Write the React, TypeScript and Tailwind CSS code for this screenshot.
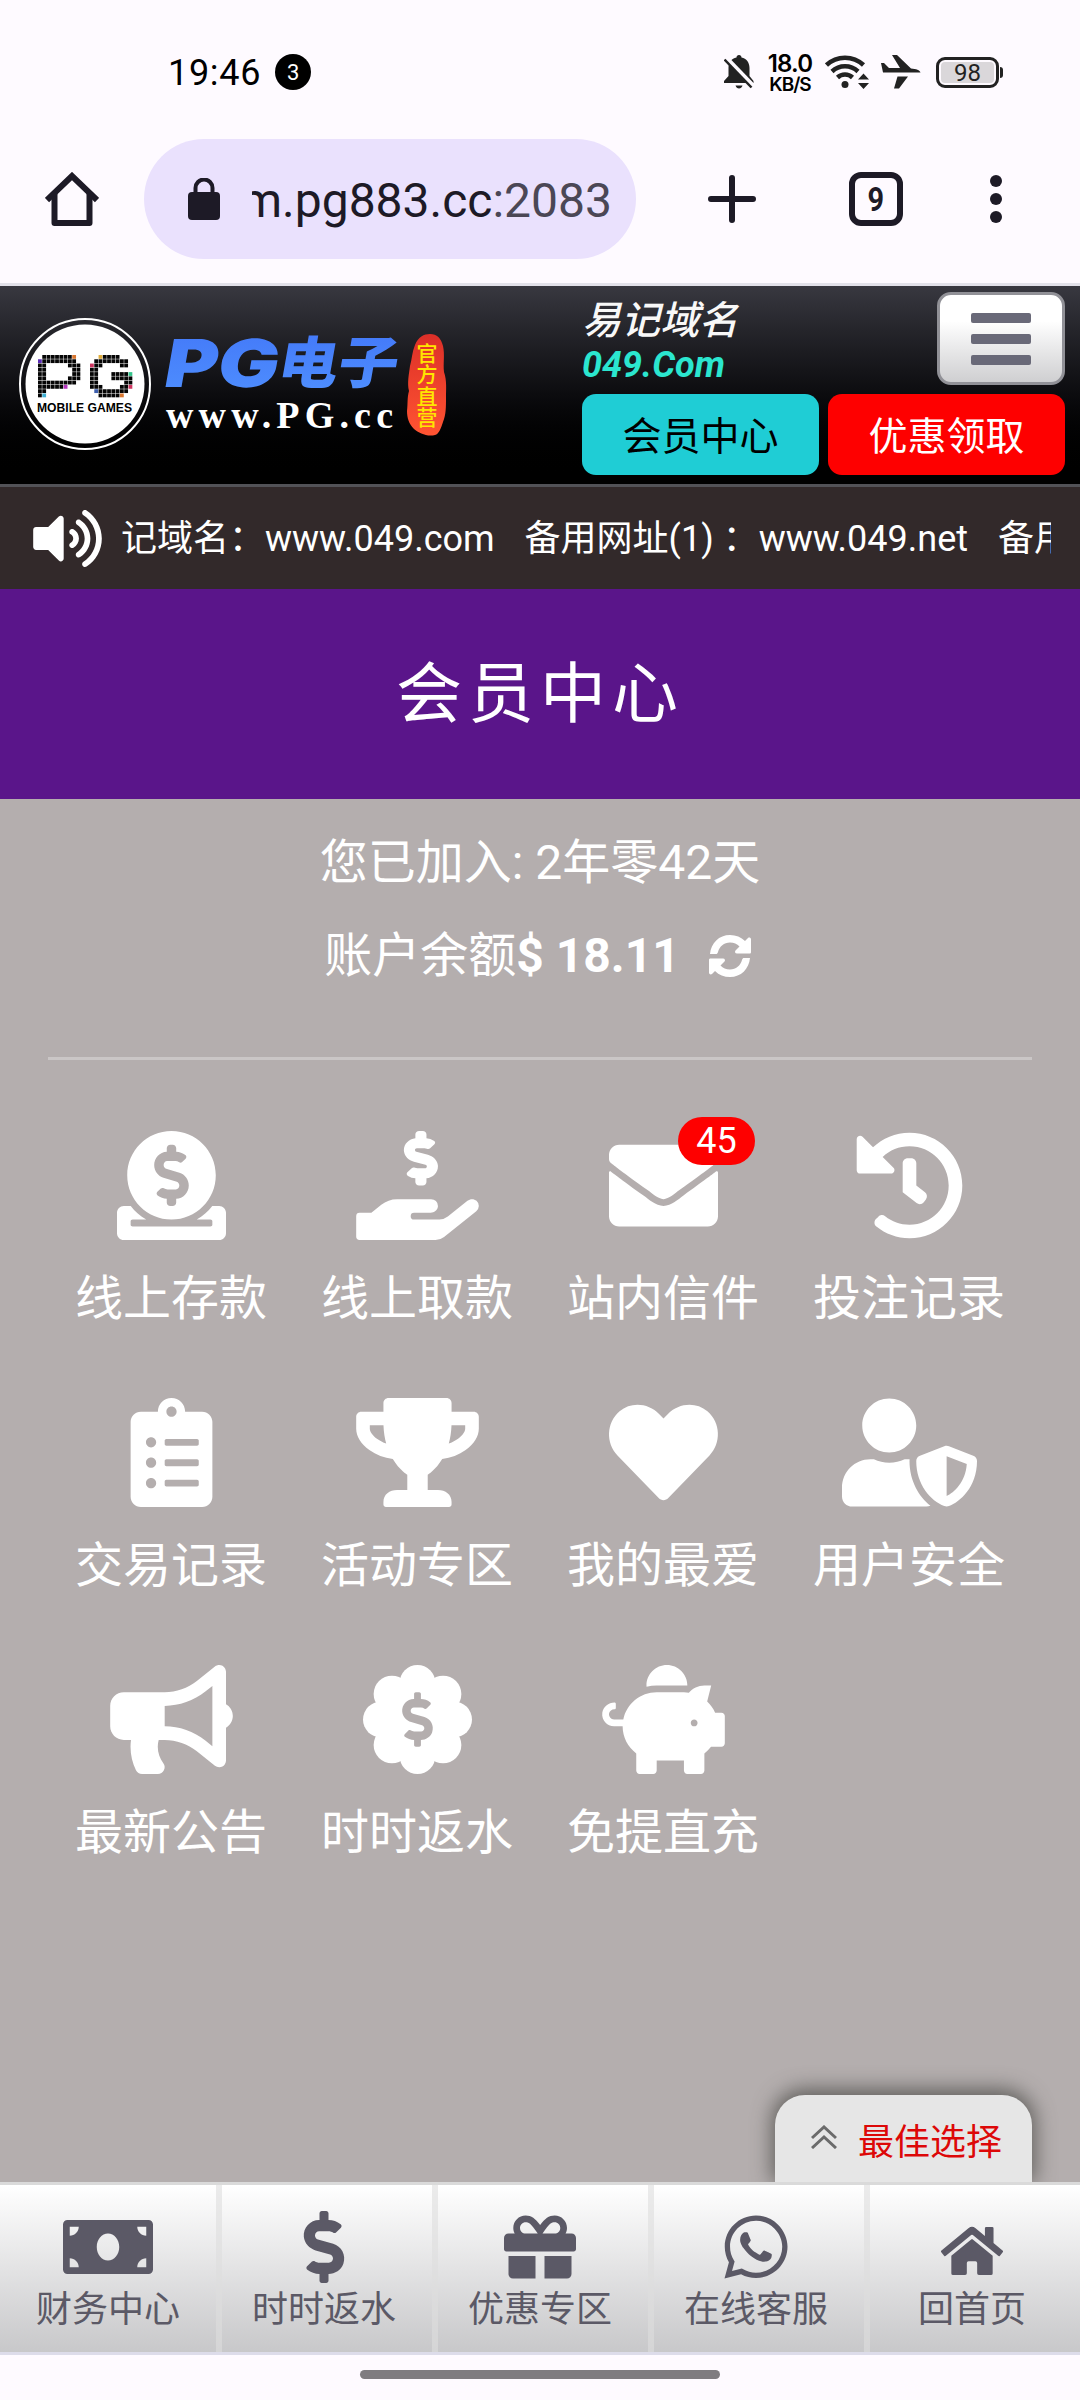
import type { IconType } from "react-icons";
import {
  FaBullhorn,
  FaClipboardList,
  FaDollarSign,
  FaDonate,
  FaEnvelope,
  FaGift,
  FaHandHoldingUsd,
  FaHeart,
  FaHistory,
  FaHome,
  FaMoneyBill,
  FaPiggyBank,
  FaTrophy,
  FaUserShield,
  FaVolumeUp,
  FaWhatsapp,
} from "react-icons/fa";

// Scalloped badge with a dollar sign cut out of it
const BadgeDollar = ({ className }: { className?: string }) => (
  <svg viewBox="0 0 512 512" className={className} fill="currentColor">
    <circle cx="256" cy="256" r="180" />
    <circle cx="256" cy="84" r="84" />
    <circle cx="376" cy="136" r="86" />
    <circle cx="428" cy="256" r="84" />
    <circle cx="376" cy="376" r="86" />
    <circle cx="256" cy="428" r="84" />
    <circle cx="136" cy="376" r="86" />
    <circle cx="84" cy="256" r="84" />
    <circle cx="136" cy="136" r="86" />
    <path
      transform="translate(184 128) scale(0.5)"
      fill="#b4aeae"
      d="M209.2 233.4l-108-31.6C88.7 198.2 80 186.5 80 173.5c0-16.3 13.2-29.5 29.5-29.5h66.3c12.2 0 24.2 3.7 34.2 10.5 6.1 4.1 14.3 3.1 19.5-2l34.8-34c7.1-6.9 6.1-18.4-1.8-24.5C238 74.8 207.4 64.1 176 64V16c0-8.8-7.2-16-16-16h-32c-8.8 0-16 7.2-16 16v48h-2.5C45.8 64-5.4 118.7.5 183.6c4.2 46.1 39.4 83.6 83.8 96.6l102.5 30c12.5 3.7 21.2 15.3 21.2 28.3 0 16.3-13.2 29.5-29.5 29.5h-66.3C100 368 88 364.3 78 357.5c-6.1-4.1-14.3-3.1-19.5 2l-34.8 34c-7.1 6.9-6.1 18.4 1.8 24.5 24.5 19.2 55.1 29.9 86.5 30v48c0 8.8 7.2 16 16 16h32c8.8 0 16-7.2 16-16v-48.2c46.6-.9 90.3-28.6 105.7-72.7 21.5-61.6-14.6-124.8-72.5-141.7z"
    />
  </svg>
);

interface MenuItem {
  label: string;
  icon: IconType | typeof BadgeDollar;
  badge?: number;
}

const menu: MenuItem[] = [
  { label: "线上存款", icon: FaDonate },
  { label: "线上取款", icon: FaHandHoldingUsd },
  { label: "站内信件", icon: FaEnvelope, badge: 45 },
  { label: "投注记录", icon: FaHistory },
  { label: "交易记录", icon: FaClipboardList },
  { label: "活动专区", icon: FaTrophy },
  { label: "我的最爱", icon: FaHeart },
  { label: "用户安全", icon: FaUserShield },
  { label: "最新公告", icon: FaBullhorn },
  { label: "时时返水", icon: BadgeDollar },
  { label: "免提直充", icon: FaPiggyBank },
];

const tabs = [
  { label: "财务中心", icon: FaMoneyBill, size: "h-[72px] w-[90px]" },
  { label: "时时返水", icon: FaDollarSign, size: "h-[72px] w-[72px]" },
  { label: "优惠专区", icon: FaGift, size: "h-[72px] w-[72px]" },
  { label: "在线客服", icon: FaWhatsapp, size: "h-[72px] w-[72px]" },
  { label: "回首页", icon: FaHome, size: "mt-2 h-[56px] w-[62px]" },
];

// Pixel letters of the round logo. "#" is black, the other letters are keys of pixelColors
const pixelP = [
  ".#######o.",
  "v########.",
  "##.....###",
  "##......##",
  "##......##",
  "##.....###",
  "#########.",
  "######m...",
  "##........",
  "#c........",
];

const pixelG = [
  "..y####...",
  ".########.",
  "r##....##.",
  "##........",
  "##...####g",
  "##...#####",
  "##......##",
  "###....##r",
  ".b#######.",
  "..#####o..",
];

const pixelColors: Record<string, string> = {
  "#": "#050505",
  o: "#d9762f",
  v: "#5a2bb5",
  m: "#b334bd",
  c: "#3fb0d4",
  y: "#e0ad3c",
  r: "#cf3560",
  g: "#35c48c",
  b: "#3d5fae",
};

const Pixels = ({ rows, x, y }: { rows: string[]; x: number; y: number }) => (
  <g>
    {rows.map((row, r) =>
      row.split("").map((cell, c) =>
        cell === "." ? null : (
          <rect key={`${r}-${c}`} x={x + c * 4.28} y={y + r * 4.28} width="3.8" height="3.8" fill={pixelColors[cell]} />
        )
      )
    )}
  </g>
);

const Logo = () => (
  <svg viewBox="16 286 434 198" className="ml-4 h-[198px] w-[434px]">
    <defs>
      <linearGradient id="seal" x1="0" y1="0" x2="0" y2="1">
        <stop offset="0" stopColor="#dc2f28" />
        <stop offset="1" stopColor="#ff5432" />
      </linearGradient>
      <linearGradient id="brand" x1="0" y1="0" x2="0" y2="1">
        <stop offset="0" stopColor="#4378f8" />
        <stop offset="1" stopColor="#4f90ff" />
      </linearGradient>
    </defs>
    <circle cx="85" cy="384" r="65" fill="none" stroke="#fff" strokeWidth="2" />
    <circle cx="85" cy="384" r="59.5" fill="#fff" />
    <Pixels rows={pixelP} x={38} y={355} />
    <Pixels rows={pixelG} x={90} y={355} />
    <text x="37" y="412" textLength="95" lengthAdjust="spacingAndGlyphs" className="font-['Liberation_Sans'] text-[12.5px] font-bold">
      MOBILE GAMES
    </text>
    <g fill="url(#brand)" className="font-['Inter','Noto_Sans_CJK_SC',sans-serif] font-black" transform="translate(65 0) skewX(-10)">
      <text x="165" y="387" textLength="114" lengthAdjust="spacingAndGlyphs" className="text-[66px]">PG</text>
      <text x="278" y="383" textLength="120" lengthAdjust="spacingAndGlyphs" className="text-[56px]">电子</text>
    </g>
    <text x="166" y="428" textLength="227" fill="#fff" className="font-['Liberation_Serif',serif] text-[38px] font-bold">
      www.PG.cc
    </text>
    <path
      fill="url(#seal)"
      d="M415 345c3-8 9-11 15-11 7 0 11 4 13 12 2 9 0 17 1 26 3 9 2 17 2 26 0 9 0 17-3 24-2 6-4 12-8 13-8 2-16-2-21-6-5-5-7-11-7-18 1-8 0-13 2-20-2-8 0-17 1-25 2-7 2-14 5-21z"
    />
    <g fill="#ffe600" textAnchor="middle" className="font-['Noto_Sans_CJK_SC',sans-serif] text-[21px] font-medium">
      <text x="427" y="361">官</text>
      <text x="427" y="382">方</text>
      <text x="427" y="404">直</text>
      <text x="427" y="425">营</text>
    </g>
  </svg>
);

const StatusBar = () => (
  <div className="flex h-[139px] items-start pt-[52px] pr-[77px] pl-[168px] text-black">
    <span className="text-[36px] leading-[43px] tracking-[0.7px]">19:46</span>
    <span className="mt-0.5 ml-[14px] flex size-9 items-center justify-center rounded-full bg-black text-[22px] text-white">3</span>
    <div className="ml-auto flex items-start">
      {/* Muted bell */}
      <svg viewBox="0 0 30 34" className="mt-[3px] h-[34px] w-[30px]" fill="#222">
        <path d="M15 0c1.500 0 2.500 1 2.500 2.500 5 1 8 5 8 10.500v8l4 5v2H0v-2l4.500-5v-8C4.500 7.500 7.500 3.500 12.500 2.500 12.500 1 13.500 0 15 0z" />
        <path d="M11.500 30.500h7c-.5 2-2 3-3.500 3s-3-1-3.500-3z" />
        <path d="M2 3l27 28" stroke="#fefaff" strokeWidth="5" />
        <path d="M0.500 4.500l27 28" stroke="#222" strokeWidth="2.500" />
      </svg>
      <div className="ml-[12px] flex w-[48px] flex-col items-center pt-px font-['Inter',sans-serif]">
        <span className="text-[24px] leading-[22px] font-semibold tracking-[-0.8px]">18.0</span>
        <span className="text-[19px] leading-[20px] font-semibold tracking-[-1px]">KB/S</span>
      </div>
      {/* Wifi with traffic arrows */}
      <svg viewBox="0 0 46 36" className="mt-[2px] ml-[11px] h-[36px] w-[46px]" fill="none" stroke="#222" strokeWidth="4.500">
        <path d="M1.500 11a27 27 0 0 1 37 0" />
        <path d="M7 17.500a19 19 0 0 1 26 0" />
        <path d="M12.500 23.500a11 11 0 0 1 15 0" />
        <circle cx="20" cy="30.500" r="3.500" fill="#222" stroke="none" />
        <path d="M33 25.500h11l-5.500-6zM33 29h11l-5.500 6z" fill="#222" stroke="none" />
      </svg>
      <svg viewBox="0 0 40 34" className="mt-[3px] ml-[10px] h-[34px] w-[40px]" fill="#222">
        <path d="M0 8h3l5 5h11L11 0h5l14 13.500c5 .5 9 1.500 9.500 4H2z" />
        <path d="M16.500 21.500H27L18 33.500h-5z" />
      </svg>
      <div className="mt-[5px] ml-[15px] flex h-[31px] w-[63px] rounded-[9px] border-[3px] border-[#222] p-0.5">
        <span className="flex-1 rounded-[4px] bg-[#dad7da] text-center text-[24px] leading-[22px] text-[#222]">98</span>
      </div>
      <span className="mt-[15px] ml-px h-[11px] w-[3px] rounded-r bg-[#222]" />
    </div>
  </div>
);

const BrowserBar = () => (
  <div className="flex h-[144px] items-start text-[#1d1a26]">
    <svg viewBox="0 0 54 54" className="mt-[33px] ml-[45px] size-[54px]" fill="none" stroke="currentColor" strokeWidth="6">
      <path d="M2 28L27 4l25 24" />
      <path d="M9.500 22v29h35V22" strokeLinejoin="round" />
    </svg>
    <div className="ml-[45px] flex h-[120px] w-[492px] items-center rounded-full bg-[#eae1fd] pl-[44px]">
      <svg viewBox="0 0 32 42" className="h-[42px] w-[32px]" fill="currentColor">
        <rect y="14" width="32" height="28" rx="4" />
        <path d="M7.500 15v-5a8.500 8.500 0 0 1 17 0v5" fill="none" stroke="currentColor" strokeWidth="4" />
      </svg>
      <div className="mt-[3px] ml-8 flex w-[360px] justify-end overflow-hidden text-[48px] leading-[64px] whitespace-nowrap">
        <span>m.pg883.cc</span>
        <span className="text-[#4b4755]">:2083</span>
      </div>
    </div>
    <svg viewBox="0 0 48 48" className="mt-[36px] ml-[72px] size-12" stroke="currentColor" strokeWidth="6" strokeLinecap="round">
      <path d="M24 3v42M3 24h42" />
    </svg>
    <div className="mt-[33px] ml-[93px] flex size-[54px] items-center justify-center rounded-[12px] border-[6px] border-current text-[34px] leading-none font-bold">
      <span className="scale-x-85">9</span>
    </div>
    <div className="mt-[36px] ml-[87px] flex flex-col gap-1.5">
      <i className="size-3 rounded-full bg-current" />
      <i className="size-3 rounded-full bg-current" />
      <i className="size-3 rounded-full bg-current" />
    </div>
  </div>
);

const Header = () => (
  <header className="flex h-[204px] justify-between border-t-[3px] border-b-[3px] border-t-[#e2e1e9] border-b-[#525257] bg-linear-to-b from-[#383840] to-black bg-origin-padding">
    <Logo />
    <div className="mr-[15px] w-[483px]">
      <div className="flex h-[108px] justify-between">
        <div className="pt-[12px] italic">
          <div className="text-[39px] leading-[46px] font-medium text-[#f8f8f8]">易记域名</div>
          <div className="text-[36px] leading-[42px] font-bold text-[#2be6cf]">049.Com</div>
        </div>
        <button className="mt-1.5 flex h-[93px] w-[128px] flex-col items-center justify-center gap-[11px] rounded-[14px] border-[3px] border-[#919197] bg-linear-to-b from-white from-30% to-[#cfcfd1]">
          <i className="h-[10px] w-[60px] rounded-[2px] bg-[#696978]" />
          <i className="h-[10px] w-[60px] rounded-[2px] bg-[#696978]" />
          <i className="h-[10px] w-[60px] rounded-[2px] bg-[#696978]" />
        </button>
      </div>
      <div className="flex gap-[9px] text-[39px] leading-[76px]">
        <button className="h-[81px] w-[237px] rounded-[14px] bg-[#1fcdd5] pt-[5px] text-black">会员中心</button>
        <button className="h-[81px] w-[237px] rounded-[14px] bg-[#fe0000] pt-[5px] text-white">优惠领取</button>
      </div>
    </div>
  </header>
);

const Marquee = () => (
  <div className="flex h-[102px] items-center bg-[#32292a] text-white">
    <FaVolumeUp className="ml-[33px] h-[61px] w-[69px]" />
    <div className="mt-px ml-[19px] flex w-[930px] gap-[30px] overflow-hidden text-[36px] leading-[54px] whitespace-nowrap">
      <span>记域名：www.049.com</span>
      <span>备用网址(1) ：www.049.net</span>
      <span>备用网址(2)</span>
    </div>
  </div>
);

const Account = () => (
  <div className="mx-12 flex h-[261px] flex-col items-center border-b-[3px] border-[#cac6c6] pt-[33px] text-[48px] leading-[62px]">
    <div>您已加入: 2年零42天</div>
    <div className="mt-[31px] flex items-center pr-[5px]">
      <span>账户余额</span>
      <b>$ 18.11</b>
      <svg viewBox="0 0 42 42" className="ml-[29px] size-[42px]" fill="currentColor">
        <path d="M1 19C2 8 10 0 21 0c6 0 11 2 15 6l3-3c1-1 3-.5 3 1.500V17c0 1-.5 1.500-1.500 1.500H28c-2 0-2.500-2-1.500-3l4-4C28 9 25 7.500 21 7.500c-6 0-10.500 4-12 9.500-.5 1.500-1 2-2 2z" />
        <path d="M41 23C40 34 32 42 21 42c-6 0-11-2-15-6l-3 3c-1 1-3 .5-3-1.500V25c0-1 .5-1.500 1.500-1.500H14c2 0 2.500 2 1.500 3l-4 4C14 33 17 34.500 21 34.500c6 0 10.500-4 12-9.500.5-1.500 1-2 2-2z" />
      </svg>
    </div>
  </div>
);

const MenuGrid = () => (
  <div className="grid grid-cols-4 px-12 pt-[71px]">
    {menu.map(({ label, icon: Icon, badge }) => (
      <div key={label} className="relative flex h-[267px] flex-col items-center">
        <Icon className="h-[109px] w-[135px]" />
        {badge && (
          <span className="absolute -top-3.5 left-[138px] h-12 w-[77px] rounded-full bg-[#fe0000] text-center text-[36px] leading-[48px]">
            {badge}
          </span>
        )}
        <span className="mt-[29px] text-[48px] leading-[60px]">{label}</span>
      </div>
    ))}
  </div>
);

const BottomNav = () => (
  <nav className="grid h-[173px] grid-cols-5 border-t-[3px] border-b-[3px] border-t-[#dadada] border-b-[#dddcea] bg-linear-to-b from-white to-[#c8c8ca] bg-origin-padding text-[#5b5966]">
    {tabs.map(({ label, icon: Icon, size }, i) => (
      <div
        key={label}
        className={`flex flex-col items-center pt-[26px] ${i > 0 ? "shadow-[inset_6px_0_0_rgba(222,222,222,0.6)]" : ""}`}
      >
        <div className="flex h-[72px] items-center">
          <Icon className={size} />
        </div>
        <span className="mt-[6px] text-[36px] leading-[42px]">{label}</span>
      </div>
    ))}
  </nav>
);

export default function App() {
  return (
    <div className="flex h-[2400px] w-[1080px] flex-col overflow-hidden bg-[#fefaff] font-['Roboto','Noto_Sans_CJK_SC',sans-serif]">
      <StatusBar />
      <BrowserBar />
      <Header />
      <Marquee />
      <h1 className="h-[210px] bg-[#5a158a] text-center text-[66px] leading-[211px] tracking-[6px] text-white">会员中心</h1>
      <main className="flex h-[1383px] flex-col bg-[#b4aeae] text-white">
        <Account />
        <MenuGrid />
        <div className="mt-auto mr-12 flex h-[87px] w-[257px] items-center self-end rounded-t-[30px] bg-[#e6e6e6] pl-9 shadow-[0_-3px_20px_3px_rgba(70,70,66,0.75)]">
          <svg viewBox="0 0 26 24" className="-mt-1 h-[24px] w-[26px]" fill="none" stroke="#6b6b6b" strokeWidth="3">
            <path d="M1 13L13 2l12 11M1 23l12-11 12 11" />
          </svg>
          <span className="mt-2 ml-[21px] text-[36px] text-[#dd0808]">最佳选择</span>
        </div>
      </main>
      <BottomNav />
      <div className="mx-auto mt-[15px] h-[9px] w-[360px] rounded-full bg-[#7f7c80]" />
    </div>
  );
}
